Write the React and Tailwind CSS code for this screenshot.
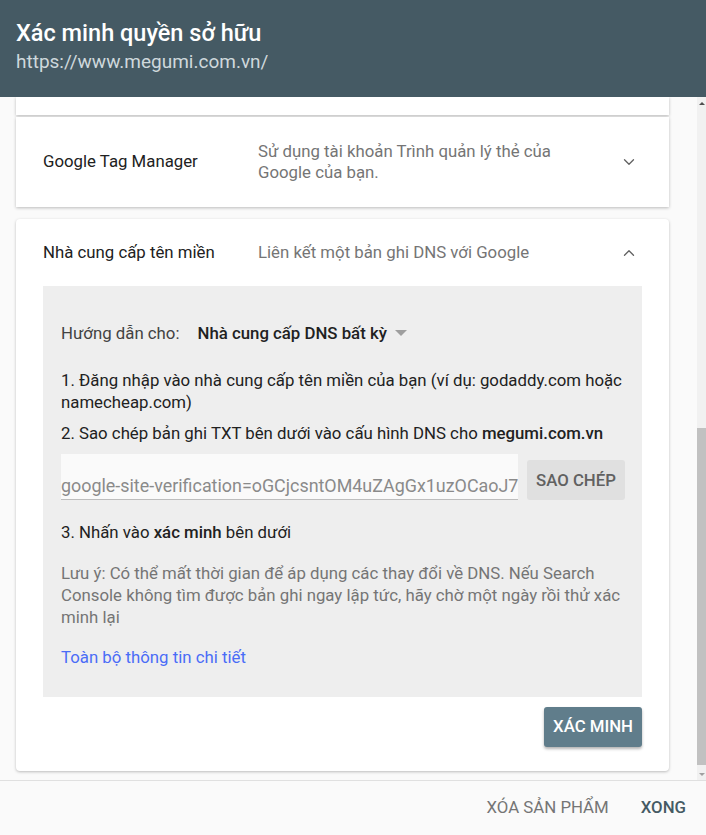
import { ChevronDown, ChevronUp } from 'lucide-react';

function PanelRow({ title, desc, open }) {
  return (
    <div className="flex items-center pl-[27px] pr-[31px]">
      <div className="w-[215px] shrink-0 text-[16.8px] text-[#212121]">{title}</div>
      <div className="flex-1 text-[16.8px] leading-[21px] text-[#757575]">{desc}</div>
      {open
        ? <ChevronUp size={18} strokeWidth={1.75} className="text-[#616161]" />
        : <ChevronDown size={18} strokeWidth={1.75} className="text-[#616161]" />}
    </div>
  );
}

export default function App() {
  return (
    <div className="flex h-[835px] w-[706px] flex-col overflow-hidden bg-[#fafafa]" style={{ fontFamily: 'Roboto, "Noto Sans", sans-serif' }}>
      <header className="h-[97px] shrink-0 bg-[#455a64] px-4 pt-[19px]">
        <h1 className="text-[23.5px] font-medium leading-[28px] text-white">Xác minh quyền sở hữu</h1>
        <p className="mt-[3px] text-[19px] leading-[24px] text-[#cfd8dc]">https://www.megumi.com.vn/</p>
      </header>

      <div className="flex min-h-0 flex-1">
        <div className="flex-1 overflow-hidden pl-4 pr-[28px]">
          <div className="h-[18px] bg-white shadow-[0_1px_3px_rgba(0,0,0,0.25)]" />
          <div className="mt-[2px] flex h-[90px] items-center bg-white shadow-[0_1px_3px_rgba(0,0,0,0.25)]">
            <div className="w-full">
              <PanelRow title="Google Tag Manager" desc={<>Sử dụng tài khoản Trình quản lý thẻ của<br />Google của bạn.</>} />
            </div>
          </div>

          <div className="mt-[12px] rounded-sm bg-white pb-[24px] shadow-[0_1px_3px_rgba(0,0,0,0.25)]">
            <div className="flex h-[67px] items-center">
              <div className="w-full">
                <PanelRow title="Nhà cung cấp tên miền" desc="Liên kết một bản ghi DNS với Google" open />
              </div>
            </div>

            <div className="mx-[27px] bg-[#eeeeee] pb-[29px] pl-[18px] pr-[16px] pt-[36px] text-[16.8px] leading-[22px] text-[#212121]">
              <div className="flex items-center">
                <span className="text-[#424242]">Hướng dẫn cho:</span>
                <span className="ml-[18px] font-medium">Nhà cung cấp DNS bất kỳ</span>
                <span className="ml-[8px] h-0 w-0 border-x-[6px] border-t-[6px] border-x-transparent border-t-[#9e9e9e]" />
              </div>

              <p className="mt-[25px]">1. Đăng nhập vào nhà cung cấp tên miền của bạn (ví dụ: godaddy.com hoặc namecheap.com)</p>
              <p className="mt-[9px]">2. Sao chép bản ghi TXT bên dưới vào cấu hình DNS cho <span className="font-medium">megumi.com.vn</span></p>

              <div className="mt-[10px] flex items-center gap-[9px]">
                <div className="flex h-[46px] w-[457px] shrink-0 items-end overflow-hidden whitespace-nowrap border-b border-[#bdbdbd] bg-[#fafafa] pb-[1px] text-[17.9px] leading-[24px] text-[#8a8a8a]">
                  google-site-verification=oGCjcsntOM4uZAgGx1uzOCaoJ7
                </div>
                <button className="mt-[6px] h-[40px] shrink-0 whitespace-nowrap rounded-[3px] bg-[#e0e0e0] px-[9px] text-[16.8px] font-medium text-[#616161]">SAO CHÉP</button>
              </div>

              <p className="mt-[21px]">3. Nhấn vào <span className="font-medium">xác minh</span> bên dưới</p>

              <p className="mt-[19px] text-[#757575]">Lưu ý: Có thể mất thời gian để áp dụng các thay đổi về DNS. Nếu Search Console không tìm được bản ghi ngay lập tức, hãy chờ một ngày rồi thử xác minh lại</p>

              <p className="mt-[18px] text-[#4a6cf7]">Toàn bộ thông tin chi tiết</p>
            </div>

            <div className="mx-[27px] mt-[10px] flex justify-end">
              <button className="h-[40px] rounded-[3px] bg-[#607d8b] px-[9px] text-[16.8px] font-medium text-white shadow-[0_2px_3px_rgba(0,0,0,0.3)]">XÁC MINH</button>
            </div>
          </div>
        </div>

        <div className="flex w-[9px] shrink-0 flex-col bg-[#f1f1f1]">
          <div className="flex h-[12px] items-center justify-center">
            <span className="h-0 w-0 border-x-[3px] border-b-[3px] border-x-transparent border-b-[#505050]" />
          </div>
          <div className="flex-1 pt-[319px] pb-[3px]">
            <div className="h-full bg-[#c1c1c1]" />
          </div>
          <div className="flex h-[12px] items-center justify-center">
            <span className="h-0 w-0 border-x-[3px] border-t-[3px] border-x-transparent border-t-[#a0a0a0]" />
          </div>
        </div>
      </div>

      <footer className="flex h-[55px] shrink-0 items-center justify-end gap-[32px] border-t border-[#e0e0e0] bg-[#fafafa] pr-[20px] text-[16.8px]">
        <span className="text-[#757575]">XÓA SẢN PHẨM</span>
        <span className="font-medium text-[#455a64]">XONG</span>
      </footer>
    </div>
  );
}
